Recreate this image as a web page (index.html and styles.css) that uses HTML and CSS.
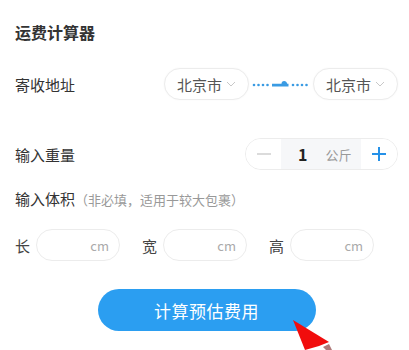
FILE: index.html
```html
<!DOCTYPE html>
<html lang="zh-CN">
<head>
  <meta charset="UTF-8" />
  <meta name="viewport" content="width=device-width, initial-scale=1.0"/>
  <title>运费计算器</title>
  <link rel="stylesheet" href="styles.css">
</head>
<body>
  <div class="calc">
    <h2 class="title">运费计算器</h2>

    <div class="row">
      <span class="label">寄收地址</span>
      <div class="route">
        <button class="city">北京市
          <svg class="chev" width="10" height="6" viewBox="0 0 10 6"><path d="M1 1l4 4 4-4" fill="none" stroke="#c8c8c8" stroke-width="1"/></svg>
        </button>
        <svg class="track" width="58" height="8" viewBox="0 0 58 8">
          <g fill="#3a9be3">
            <circle cx="2" cy="5" r="1.3"/>
            <circle cx="6.5" cy="5" r="1.3"/>
            <circle cx="11" cy="5" r="1.3"/>
            <circle cx="15.5" cy="5" r="1.3"/>
            <path d="M20 3.8h9.5c0-1.7 1-2.8 2.6-2.8s2.8 1.1 3.2 2.8h1.2v2.6H20z"/>
            <circle cx="41" cy="5" r="1.3"/>
            <circle cx="45.5" cy="5" r="1.3"/>
            <circle cx="50" cy="5" r="1.3"/>
            <circle cx="54.5" cy="5" r="1.3"/>
          </g>
        </svg>
        <button class="city">北京市
          <svg class="chev" width="10" height="6" viewBox="0 0 10 6"><path d="M1 1l4 4 4-4" fill="none" stroke="#c8c8c8" stroke-width="1"/></svg>
        </button>
      </div>
    </div>

    <div class="row weight">
      <span class="label">输入重量</span>
      <div class="stepper">
        <button class="step minus"><svg width="16" height="16" viewBox="0 0 16 16"><path d="M1 8h14" stroke="#cfcfcf" stroke-width="1.4"/></svg></button>
        <div class="amount"><span class="num">1</span><span class="unit">公斤</span></div>
        <button class="step plus"><svg width="16" height="16" viewBox="0 0 16 16"><path d="M1 8h14M8 1v14" stroke="#2591e8" stroke-width="2"/></svg></button>
      </div>
    </div>

    <div class="vol-title">输入体积<span class="hint">（非必填，适用于较大包裹）</span></div>

    <div class="dims">
      <label class="dim">长<span class="box">cm</span></label>
      <label class="dim">宽<span class="box">cm</span></label>
      <label class="dim">高<span class="box">cm</span></label>
    </div>

    <div class="actions">
      <button class="calc-btn">计算预估费用</button>
    </div>

    <svg class="pointer" width="60" height="38" viewBox="0 0 60 38">
      <polygon points="8,8 44,30 34,34 20,38" fill="#f10d0d"/>
      <polygon points="38,35 44,32 47,38 41,38" fill="#b07a7a"/>
    </svg>
  </div>
</body>
</html>
```

FILE: styles.css
```css
* {
  margin: 0;
  padding: 0;
  box-sizing: border-box;
  font-family: "Noto Sans CJK SC", "Noto Sans", sans-serif;
}

body {
  background-color: #fff;
  color: #333;
  width: 409px;
  height: 350px;
  overflow: hidden;
}

.calc {
  position: relative;
  height: 350px;
  padding: 20px 11px 0 15px;
}

.title {
  font-size: 16px;
  font-weight: 700;
  line-height: 24px;
  color: #333;
  margin-bottom: 24px;
}

.row {
  display: flex;
  align-items: center;
  justify-content: space-between;
  height: 32px;
}

.label {
  font-size: 15px;
  color: #333;
}

.route {
  display: flex;
  align-items: center;
}

.city {
  display: flex;
  align-items: center;
  flex-shrink: 0;
  gap: 4px;
  width: 85px;
  height: 32px;
  padding-left: 12px;
  border: 1px solid #ececec;
  border-radius: 16px;
  background: #fff;
  font-size: 15px;
  color: #555;
  box-shadow: 0 0 2px rgba(0,0,0,0.04);
}

.track {
  flex-shrink: 0;
  margin: 0 3px;
}

.weight {
  margin-top: 38px;
}

.stepper {
  display: flex;
  width: 153px;
  height: 32px;
  border: 1px solid #ececec;
  border-radius: 16px;
  overflow: hidden;
  background: #fff;
}

.step {
  display: flex;
  align-items: center;
  justify-content: center;
  width: 35px;
  border: none;
  background: #fff;
}

.plus {
  width: 36px;
}

.amount {
  flex: 1;
  display: flex;
  align-items: center;
  gap: 18px;
  padding-left: 17px;
  background: #f6f7f9;
}

.num {
  font-size: 16px;
  font-weight: 700;
  color: #222;
}

.unit {
  font-size: 13px;
  color: #999;
}

.vol-title {
  margin-top: 18px;
  font-size: 15px;
  line-height: 22px;
}

.hint {
  font-size: 13px;
  color: #999;
}

.dims {
  display: flex;
  gap: 22px;
  margin-top: 18px;
}

.dim {
  display: flex;
  align-items: center;
  flex-shrink: 0;
  gap: 6px;
  font-size: 15px;
  color: #444;
}

.box {
  display: flex;
  align-items: center;
  justify-content: flex-end;
  flex-shrink: 0;
  width: 84px;
  height: 32px;
  padding-right: 10px;
  border: 1px solid #ececec;
  border-radius: 16px;
  font-size: 13px;
  color: #aaa;
}

.actions {
  display: flex;
  justify-content: center;
  margin-top: 28px;
}

.calc-btn {
  width: 218px;
  height: 42px;
  border: none;
  border-radius: 21px;
  background-color: #2b9ef1;
  color: #fff;
  font-size: 17px;
  letter-spacing: 0.5px;
}

.pointer {
  position: absolute;
  left: 285px;
  top: 312px;
}
```
